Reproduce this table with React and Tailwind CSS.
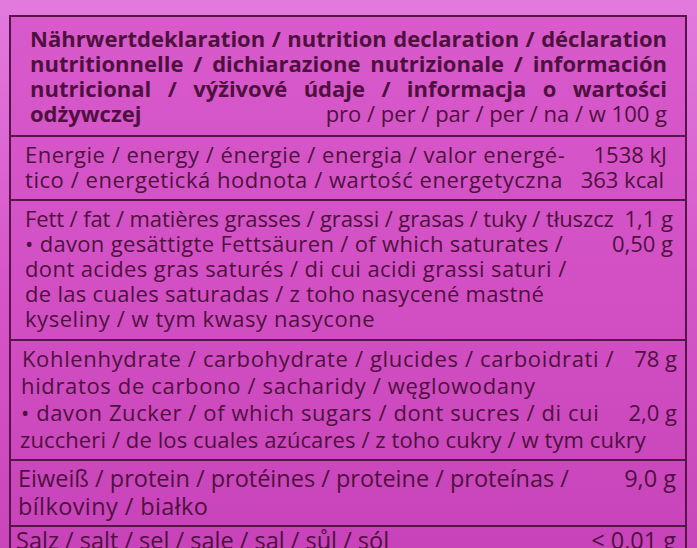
import React from "react";

const Line = ({ left, right, className = "" }) => (
  <div className={"flex justify-between items-baseline whitespace-nowrap " + className}>
    <span>{left}</span>
    {right ? <span className="tracking-normal">{right}</span> : null}
  </div>
);

const J = ({ children }) => (
  <div className="font-bold whitespace-nowrap text-justify [text-align-last:justify]">{children}</div>
);

export default function App() {
  return (
    <div
      className="w-[697px] h-[548px] overflow-hidden bg-linear-to-b from-[#e27ade] via-[#d656c9] to-[#c946ba] text-[#4e113e] pt-[15px] pl-[9px] pr-[10px]"
      style={{ fontFamily: '"Open Sans", "DejaVu Sans", sans-serif' }}
    >
      <div className="h-full border-l-2 border-r-2 border-t-2 border-[#571547] bg-linear-to-b from-[#d85acb] via-[#d250c4] to-[#c843b9]">
        {/* header */}
        <div className="pl-[19px] pr-[18px] pt-[9px] pb-[9px] text-[22px] leading-[25px]">
          <J>Nährwertdeklaration / nutrition declaration / déclaration</J>
          <J>nutritionnelle / dichiarazione nutrizionale / información</J>
          <J>nutricional / výživové údaje / informacja o wartości</J>
          <div className="flex justify-between items-baseline whitespace-nowrap">
            <span className="font-bold">odżywczej</span>
            <span>pro / per / par / per / na / w 100 g</span>
          </div>
        </div>
        {/* energy */}
        <div className="border-t-2 border-[#571547] pl-[14px] pr-[18px] pt-[5px] pb-[7px] text-[22px] leading-[25px]">
          <Line className="tracking-[0.5px]" left="Energie / energy / énergie / energia / valor energé-" right="1538 kJ" />
          <Line className="tracking-[0.55px] pr-[3px]" left="tico / energetická hodnota / wartość energetyczna" right="363 kcal" />
        </div>
        {/* fat */}
        <div className="border-t-2 border-[#571547] pl-[14px] pr-[12px] pt-[5px] pb-[8px] text-[22px] leading-[25px]">
          <Line className="tracking-[-0.1px]" left="Fett / fat / matières grasses / grassi / grasas / tuky / tłuszcz" right="1,1 g" />
          <Line className="tracking-[0.33px]" left="• davon gesättigte Fettsäuren / of which saturates /" right="0,50 g" />
          <Line className="tracking-[0.4px]" left="dont acides gras saturés / di cui acidi grassi saturi /" />
          <Line className="tracking-[0.3px]" left="de las cuales saturadas / z toho nasycené mastné" />
          <Line className="tracking-[0.55px]" left="kyseliny / w tym kwasy nasycone" />
        </div>
        {/* carbs */}
        <div className="border-t-2 border-[#571547] pl-[9px] pr-[8px] pt-[4px] pb-[6px] text-[22px] leading-[27px]">
          <Line className="tracking-[0.65px] pl-[2px]" left="Kohlenhydrate / carbohydrate / glucides / carboidrati /" right="78 g" />
          <Line className="tracking-[0.65px] pl-[1px]" left="hidratos de carbono / sacharidy / węglowodany" />
          <Line className="tracking-[0.6px] pl-[1px]" left="• davon Zucker / of which sugars / dont sucres / di cui" right="2,0 g" />
          <Line className="tracking-[0.1px]" left="zuccheri / de los cuales azúcares / z toho cukry / w tym cukry" />
        </div>
        {/* protein */}
        <div className="border-t-2 border-[#571547] pl-[7px] pr-[9px] pt-[3px] pb-[5px] text-[23.5px] leading-[28px]">
          <Line left="Eiweiß / protein / protéines / proteine / proteínas /" right="9,0 g" />
          <Line className="tracking-[0.4px]" left="bílkoviny / białko" />
        </div>
        {/* salt */}
        <div className="border-t-2 border-[#571547] pl-[5px] pr-[9px] pt-0 text-[23.5px] leading-[26px]">
          <Line left="Salz / salt / sel / sale / sal / sůl / sól" right="< 0,01 g" />
        </div>
      </div>
    </div>
  );
}
